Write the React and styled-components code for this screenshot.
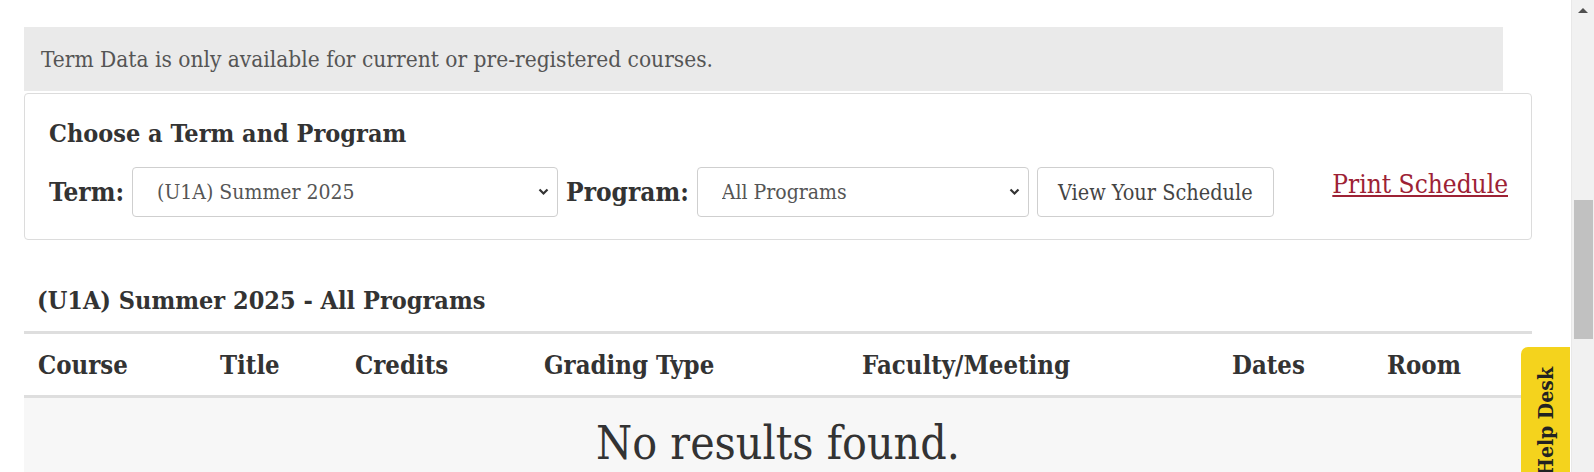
import React from 'react'
import styled, { createGlobalStyle } from 'styled-components'

const GlobalStyle = createGlobalStyle`
  html, body {
    margin: 0;
    padding: 0;
    height: 472px;
    overflow: hidden;
    background: #fff;
  }
  body {
    font-family: "DejaVu Serif Condensed", "DejaVu Serif", serif;
    font-stretch: condensed;
    color: #333;
  }
`

const Shell = styled.div`
  display: flex;
  height: 472px;
`

const Page = styled.main`
  flex: 1;
  min-width: 0;
  padding: 27px 39px 0 24px;
`

const Notice = styled.div`
  background: #eaeaea;
  height: 64px;
  margin-right: 29px;
  padding-left: 17px;
  display: flex;
  align-items: center;
  font-size: 22.5px;
  color: #555;
`

const Card = styled.section`
  margin-top: 2px;
  border: 1px solid #dcdcdc;
  border-radius: 4px;
  padding: 25px 23px 22px 24px;
`

const CardTitle = styled.h2`
  margin: 0 0 18px;
  font-size: 25px;
  font-weight: bold;
  line-height: 30px;
  color: #333;
`

const FilterRow = styled.div`
  display: flex;
  align-items: center;
`

const Label = styled.label`
  font-size: 26px;
  font-weight: bold;
  color: #333;
  margin-right: 8px;
`

const SelectBox = styled.div`
  width: ${p => p.$w}px;
  height: 50px;
  flex: none;
  box-sizing: border-box;
  border: 1px solid #cfcfcf;
  border-radius: 4px;
  display: flex;
  align-items: center;
  padding: 0 8px 0 24px;
  margin-right: 8px;
  select {
    flex: 1;
    min-width: 0;
    appearance: none;
    border: none;
    background: transparent;
    font: inherit;
    font-size: 21px;
    color: #555;
    outline: none;
    padding: 0;
  }
  svg {
    flex: none;
  }
`

const Button = styled.button`
  height: 50px;
  width: 237px;
  flex: none;
  box-sizing: border-box;
  border: 1px solid #cfcfcf;
  border-radius: 4px;
  background: #fff;
  font: inherit;
  font-size: 21.5px;
  color: #444;
  padding: 0;
`

const PrintLink = styled.a`
  margin-left: auto;
  margin-top: -17px;
  font-size: 26px;
  color: #9d2235;
  text-decoration: underline;
`

const SectionTitle = styled.h3`
  margin: 46px 0 0 13px;
  font-size: 25px;
  font-weight: bold;
  line-height: 30px;
  color: #333;
`

const Table = styled.div`
  margin-top: 15px;
  border-top: 3px solid #dedede;
`

const HeadRow = styled.div`
  display: grid;
  grid-template-columns: 182px 135px 189px 318px 370px 155px 1fr;
  height: 61px;
  align-items: center;
  border-bottom: 3px solid #dedede;
`

const HeadCell = styled.div`
  padding-left: 14px;
  font-size: 25.5px;
  font-weight: bold;
  color: #333;
`

const Empty = styled.div`
  background: #f7f7f7;
  height: 120px;
  text-align: center;
  font-size: 46px;
  line-height: 46px;
  padding-top: 22px;
  color: #333;
`

const Scrollbar = styled.div`
  width: 23px;
  flex: none;
  background: #f1f1f1;
  border-left: 1px solid #e8e8e8;
  box-sizing: border-box;
  display: flex;
  flex-direction: column;
  align-items: center;
`

const ScrollArrow = styled.div`
  margin-top: 8px;
  width: 0;
  height: 0;
  border-left: 5px solid transparent;
  border-right: 5px solid transparent;
  border-bottom: 5px solid #505050;
`

const ScrollThumb = styled.div`
  margin-top: 187px;
  width: 19px;
  height: 139px;
  background: #c1c1c1;
`

const HelpDesk = styled.button`
  position: fixed;
  right: 24px;
  top: 347px;
  width: 49px;
  height: 140px;
  border: none;
  border-top-left-radius: 7px;
  background: #f4d31d;
  padding: 0;
  display: flex;
  align-items: flex-start;
  justify-content: center;
  font: inherit;
  span {
    writing-mode: vertical-rl;
    transform: rotate(180deg);
    font-size: 21px;
    font-weight: bold;
    color: #222;
    margin-top: 20px;
    white-space: nowrap;
  }
`

const Chevron = () => (
  <svg width="11" height="8" viewBox="0 0 11 8">
    <path d="M1.5 1.5 L5.5 5.5 L9.5 1.5" fill="none" stroke="#333" strokeWidth="2.2" />
  </svg>
)

const columns = ['Course', 'Title', 'Credits', 'Grading Type', 'Faculty/Meeting', 'Dates', 'Room']

export default function App() {
  return (
    <Shell>
      <GlobalStyle />
      <Page>
        <Notice>Term Data is only available for current or pre-registered courses.</Notice>
        <Card>
          <CardTitle>Choose a Term and Program</CardTitle>
          <FilterRow>
            <Label>Term:</Label>
            <SelectBox $w={426}>
              <select defaultValue="U1A">
                <option value="U1A">(U1A) Summer 2025</option>
              </select>
              <Chevron />
            </SelectBox>
            <Label>Program:</Label>
            <SelectBox $w={332}>
              <select defaultValue="all">
                <option value="all">All Programs</option>
              </select>
              <Chevron />
            </SelectBox>
            <Button>View Your Schedule</Button>
            <PrintLink href="#">Print Schedule</PrintLink>
          </FilterRow>
        </Card>
        <SectionTitle>(U1A) Summer 2025 - All Programs</SectionTitle>
        <Table>
          <HeadRow>
            {columns.map(c => (
              <HeadCell key={c}>{c}</HeadCell>
            ))}
          </HeadRow>
          <Empty>No results found.</Empty>
        </Table>
      </Page>
      <Scrollbar>
        <ScrollArrow />
        <ScrollThumb />
      </Scrollbar>
      <HelpDesk>
        <span>Help Desk</span>
      </HelpDesk>
    </Shell>
  )
}
